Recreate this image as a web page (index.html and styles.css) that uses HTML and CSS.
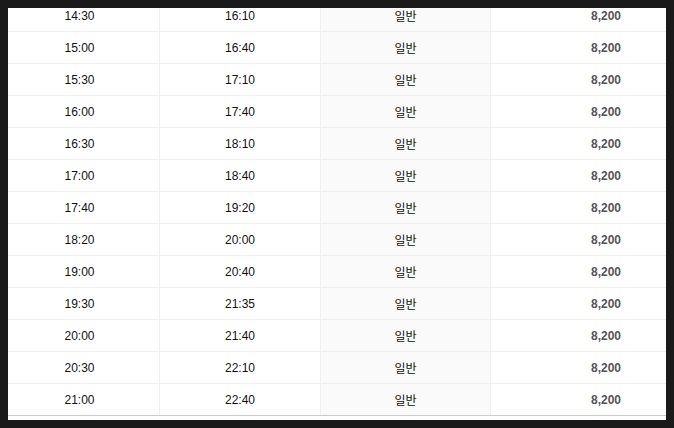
FILE: index.html
```html
<!DOCTYPE html>
<html lang="ko">
<head>
<meta charset="utf-8">
<link rel="stylesheet" href="styles.css">
</head>
<body>
<div class="viewport">
  <table class="timetable">
    <tbody>
      <tr><td>14:30</td><td>16:10</td><td class="type">일반</td><td class="price">8,200</td></tr>
      <tr><td>15:00</td><td>16:40</td><td class="type">일반</td><td class="price">8,200</td></tr>
      <tr><td>15:30</td><td>17:10</td><td class="type">일반</td><td class="price">8,200</td></tr>
      <tr><td>16:00</td><td>17:40</td><td class="type">일반</td><td class="price">8,200</td></tr>
      <tr><td>16:30</td><td>18:10</td><td class="type">일반</td><td class="price">8,200</td></tr>
      <tr><td>17:00</td><td>18:40</td><td class="type">일반</td><td class="price">8,200</td></tr>
      <tr><td>17:40</td><td>19:20</td><td class="type">일반</td><td class="price">8,200</td></tr>
      <tr><td>18:20</td><td>20:00</td><td class="type">일반</td><td class="price">8,200</td></tr>
      <tr><td>19:00</td><td>20:40</td><td class="type">일반</td><td class="price">8,200</td></tr>
      <tr><td>19:30</td><td>21:35</td><td class="type">일반</td><td class="price">8,200</td></tr>
      <tr><td>20:00</td><td>21:40</td><td class="type">일반</td><td class="price">8,200</td></tr>
      <tr><td>20:30</td><td>22:10</td><td class="type">일반</td><td class="price">8,200</td></tr>
      <tr class="last"><td>21:00</td><td>22:40</td><td class="type">일반</td><td class="price">8,200</td></tr>
    </tbody>
  </table>
</div>
</body>
</html>
```
FILE: styles.css
```css
html, body {
  margin: 0;
  padding: 0;
  background: #1a1a1a;
}
.viewport {
  margin: 8px;
  width: 658px;
  height: 412px;
  background: #fff;
  overflow: hidden;
}
.timetable {
  border-collapse: collapse;
  table-layout: fixed;
  width: 674px;
  margin-left: -8px;
  margin-top: -8px;
  font-family: "Liberation Sans", "Noto Sans CJK KR", sans-serif;
  font-size: 12px;
  color: #111;
}
.timetable td {
  height: 31px;
  padding: 0;
  text-align: center;
  vertical-align: middle;
  border-bottom: 1px solid #f0f0f0;
  border-right: 1px solid #f0f0f0;
  line-height: 14px;
}
.timetable td:nth-child(1) { width: 159px; }
.timetable td:nth-child(2) { width: 160px; }
.timetable td:nth-child(3) { width: 169px; }
.timetable td:nth-child(4) { border-right: none; }
.timetable .type {
  background: #fafafa;
  font-family: "Noto Sans CJK KR", sans-serif;
  font-size: 12px;
}
.timetable .price {
  text-align: right;
  padding-right: 53px;
  font-weight: bold;
  color: #555;
}
.timetable tr.last td {
  border-bottom-color: #cccccc;
}
```
